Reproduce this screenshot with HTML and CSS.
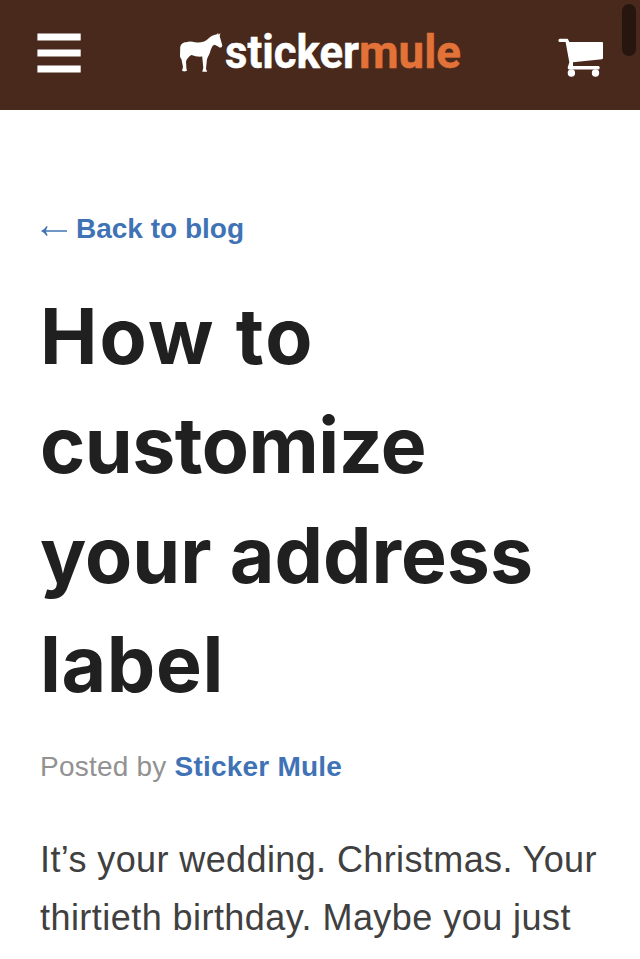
FILE: index.html
```html
<!DOCTYPE html>
<html lang="en">
<head>
<meta charset="utf-8">
<title>How to customize your address label</title>
<link rel="stylesheet" href="styles.css">
</head>
<body>
<header class="bar">
  <svg class="menu" viewBox="0 0 44 40"><path d="M.4 .4h43.3v7.1H.4zM.4 16.4h43.3v7.1H.4zM.4 32.4h43.3v7.1H.4z"/></svg>
  <a class="logo">
    <svg class="mule" viewBox="0 0 43 40"><path d="M6.2 9.2C8.5 8.2 12 8.3 15 9.2C20 10 24 9.2 27 6.8C30 3.8 33 1.9 37 1.3L38 .1L38.6 1.8L40.4 0L39.7 3.3L42.3 12.2C42.2 14.5 40 15.6 38.2 13.4L34.5 11.8C31.6 13 31 16.5 29.8 20C28.8 22.8 27 24.5 26.7 29L26 35.7L27.2 38.8H22.3L23.3 34.7L22.2 23.6C18 24.1 14.5 23 11.2 22C8.4 24.2 6.5 26 6 28.5L6.4 35.2L7 37.7L4.2 38.6L2 37.8L3 34L1.6 27L1.2 25.7Q.2 25 0 23L.2 14.3C.6 11.2 3 9 6.2 9.2Z"/></svg>
    <svg class="word" viewBox="0 0 236 48"><text class="white" x="0" y="37" textLength="134" lengthAdjust="spacingAndGlyphs">sticker</text><text class="orange" x="134" y="37" textLength="102" lengthAdjust="spacingAndGlyphs">mule</text></svg>
  </a>
  <svg class="cart" viewBox="0 0 46 40"><path d="M2 .7h7q1 0 1.4 1.2L11.3 4H44q1 0 1 1v15q0 1-1 1.2L15 24.2V28h25.5q1.2 0 1.2 1.7T40.5 31.4H11q-1.3 0-1.3-2l1.6-5.2L7.6 4H2Q.4 4 .4 2.4T2 .7Z"/><circle cx="13.4" cy="35" r="3.7"/><circle cx="37.5" cy="35" r="3.7"/></svg>
</header>
<div class="scroll"></div>
<main>
  <a class="back"><svg class="arrow" viewBox="0 0 28 14"><path class="shaft" d="M27 7H4"/><path d="M1 7Q5 5 6.6 2L7.6 2.7L5.6 7L7.6 11.3L6.6 12Q5 9 1 7Z"/></svg><span>Back to blog</span></a>
  <h1><span class="l1">How to</span><span class="l2">customize</span><span class="l3">your address</span><span class="l4">label</span></h1>
  <p class="by">Posted by <b>Sticker Mule</b></p>
  <p class="copy"><span class="c1">It’s your wedding. Christmas. Your</span><br><span class="c2">thirtieth birthday. Maybe you just</span></p>
</main>
</body>
</html>
```
FILE: styles.css
```css
* { box-sizing: border-box; }
body { margin: 0; height: 959px; overflow: hidden; background: #fff; font-family: "Liberation Sans", Arial, sans-serif; }
.bar { height: 110px; background: #48291b; display: flex; align-items: flex-start; }
svg { display: block; flex: none; fill: #fff; }
.menu { width: 44px; height: 40px; margin: 33px 0 0 37px; }
.logo { display: flex; margin-left: 99px; }
.mule { width: 43px; height: 40px; margin-top: 33px; }
.word { width: 236px; height: 48px; margin: 31px 0 0 2px; overflow: visible; }
.word text { font: 700 46px Roboto, sans-serif; stroke: #fff; stroke-width: .5; }
.word .orange { fill: #e37238; stroke: #e37238; }
.cart { width: 46px; height: 40px; margin: 38px 0 0 97px; }
.scroll { position: absolute; left: 622px; top: 4px; width: 14px; height: 52px; border-radius: 7px; background: #26160f; }
main { padding: 99px 0 0 40px; }
.back { display: flex; align-items: center; height: 40px; font-size: 28px; font-weight: 700; line-height: 40px; color: #3f73b5; }
.arrow { width: 28px; height: 14px; margin: 4px 8px 0 0; fill: #3f73b5; }
.shaft { stroke: #3f73b5; stroke-width: 1.5; }
h1 { margin: 32.5px 0 0; font: 700 77px/109.5px Inter, sans-serif; color: #202020; }
h1 span { display: block; white-space: nowrap; }
.l1 { letter-spacing: 2.1px; }
.l2 { letter-spacing: -.5px; }
.l4 { letter-spacing: .6px; }
p { margin: 0; white-space: nowrap; }
.by { margin-top: 27.5px; font-size: 28px; line-height: 40px; letter-spacing: .22px; color: #929292; }
.by b { color: #3f73b5; }
.copy { margin-top: 44px; font-size: 36px; line-height: 58px; color: #404040; }
.c1 { letter-spacing: .39px; }
.c2 { letter-spacing: .45px; }
```
